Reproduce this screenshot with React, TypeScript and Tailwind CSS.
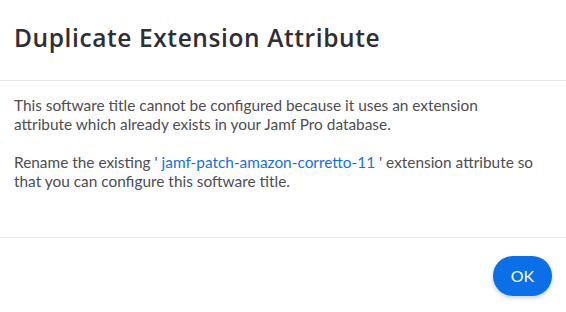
export default function App() {
  return (
    <div className="flex h-[312px] w-[566px] flex-col bg-white font-['Lato',sans-serif] text-[#3a3a3f]">
      <div className="flex h-[81px] items-center border-b border-[#e6e6e6] px-[14px] pb-[3px]">
        <h1 className="font-['Open_Sans',sans-serif] text-[24.5px] font-semibold leading-none tracking-[0.6px] text-[#2e2e34]">Duplicate Extension Attribute</h1>
      </div>
      <div className="flex h-[157px] flex-col gap-[19px] border-b border-[#e6e6e6] px-[14px] pt-[15px] text-[15.4px] leading-[19px] text-[#4d4d53]">
        <p className="max-w-[525px]">
          This software title cannot be configured because it uses an extension attribute which already exists in your Jamf Pro database.
        </p>
        <p className="max-w-[525px]">
          Rename the existing ' <span className="text-[#1a6fe0]">jamf-patch-amazon-corretto-11</span> ' extension attribute so that you can configure this software title.
        </p>
      </div>
      <div className="flex flex-1 items-start justify-end px-[14px] pt-[18px]">
        <button className="h-[40px] w-[59px] rounded-full bg-[#0b6fe8] text-[16px] text-white shadow-[0_2px_4px_rgba(0,0,0,0.2)]">
          OK
        </button>
      </div>
    </div>
  );
}
